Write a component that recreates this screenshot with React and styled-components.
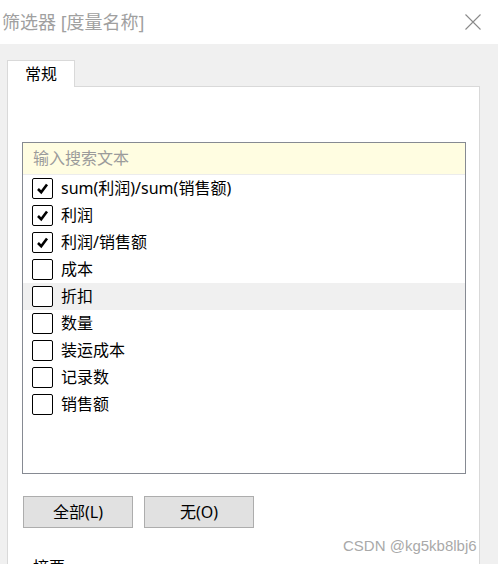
import React from 'react';
import styled, { createGlobalStyle } from 'styled-components';

const GlobalStyle = createGlobalStyle`
  html, body {
    margin: 0;
    padding: 0;
    background: #f0f0f0;
  }
  * { box-sizing: border-box; }
`;

const FONT = `"Noto Sans", "Noto Sans CJK SC", "Liberation Sans", sans-serif`;

const Dialog = styled.div`
  position: relative;
  width: 498px;
  height: 564px;
  overflow: hidden;
  background: #f0f0f0;
  font-family: ${FONT};
`;

const TitleBar = styled.div`
  height: 44px;
  background: #ffffff;
  display: flex;
  align-items: center;
  justify-content: space-between;
  padding: 0 17px 0 2px;
`;

const Title = styled.div`
  font-size: 18px;
  line-height: 20px;
  color: #a0a0a0;
  margin-top: -1px;
`;

const CloseButton = styled.div`
  width: 16px;
  height: 16px;
  display: flex;
  cursor: pointer;
  margin-top: -1px;
`;

const Body = styled.div`
  padding: 16px 0 0 7px;
`;

const TabStrip = styled.div`
  display: flex;
`;

const Tab = styled.div`
  position: relative;
  z-index: 1;
  width: 68px;
  height: 27px;
  margin-bottom: -1px;
  background: #ffffff;
  border: 1px solid #d9d9d9;
  border-bottom: none;
  font-size: 16px;
  line-height: 26px;
  color: #000;
  text-align: center;
`;

const Panel = styled.div`
  width: 473px;
  height: 500px;
  background: #ffffff;
  border: 1px solid #d9d9d9;
  padding: 55px 0 0 14px;
`;

const ListBox = styled.div`
  width: 444px;
  height: 332px;
  border: 1px solid #868a92;
  background: #ffffff;
`;

const SearchRow = styled.div`
  height: 32px;
  background: #fffde1;
  border-bottom: 1px solid #ececec;
  padding-left: 10px;
  font-size: 16px;
  line-height: 31px;
  color: #9b9b9b;
`;

const Row = styled.div`
  height: 27px;
  display: flex;
  align-items: center;
  gap: 8px;
  padding-left: 9px;
  background: ${(p) => (p.$hover ? '#f0f0f0' : 'transparent')};
  font-size: 16px;
  color: #000;
`;

const Box = styled.div`
  width: 21px;
  height: 21px;
  border: 1.5px solid #000;
  border-radius: 2px;
  background: #fff;
  display: flex;
  align-items: center;
  justify-content: center;
  flex-shrink: 0;
`;

const Label = styled.span`
  line-height: 20px;
  margin-top: -1px;
`;

const ButtonRow = styled.div`
  display: flex;
  gap: 11px;
  margin: 22px 0 0 1px;
`;

const Button = styled.button`
  width: 110px;
  height: 32px;
  background: #e1e1e1;
  border: 1px solid #adadad;
  font-family: ${FONT};
  font-size: 16px;
  line-height: 20px;
  color: #000;
  padding: 0;
  cursor: pointer;
`;

const SectionLabel = styled.div`
  margin: 29px 0 0 11px;
  font-size: 16px;
  line-height: 20px;
  color: #000;
`;

const Watermark = styled.div`
  position: absolute;
  left: 343px;
  top: 537px;
  font-family: "Liberation Sans", Arial, sans-serif;
  font-size: 15px;
  line-height: 17px;
  color: #a9a9a9;
`;

const items = [
  { name: 'sum(利润)/sum(销售额)', checked: true },
  { name: '利润', checked: true },
  { name: '利润/销售额', checked: true },
  { name: '成本', checked: false },
  { name: '折扣', checked: false, hover: true },
  { name: '数量', checked: false },
  { name: '装运成本', checked: false },
  { name: '记录数', checked: false },
  { name: '销售额', checked: false },
];

function Check() {
  return (
    <svg width="15" height="15" viewBox="0 0 15 15">
      <path d="M3 8 L6.2 11.2 L12 3.5" fill="none" stroke="#000" strokeWidth="2.6" strokeLinecap="butt" strokeLinejoin="miter" />
    </svg>
  );
}

export default function App() {
  return (
    <>
      <GlobalStyle />
      <Dialog>
        <TitleBar>
          <Title>筛选器 [度量名称]</Title>
          <CloseButton>
            <svg width="16" height="16" viewBox="0 0 16 16">
              <path d="M0.5 0.5 L15.5 15.5 M15.5 0.5 L0.5 15.5" stroke="#8a8a8a" strokeWidth="1.1" fill="none" />
            </svg>
          </CloseButton>
        </TitleBar>
        <Body>
          <TabStrip>
            <Tab>常规</Tab>
          </TabStrip>
          <Panel>
            <ListBox>
              <SearchRow>输入搜索文本</SearchRow>
              {items.map((it) => (
                <Row key={it.name} $hover={it.hover}>
                  <Box>{it.checked && <Check />}</Box>
                  <Label>{it.name}</Label>
                </Row>
              ))}
            </ListBox>
            <ButtonRow>
              <Button>全部(L)</Button>
              <Button>无(O)</Button>
            </ButtonRow>
            <SectionLabel>摘要</SectionLabel>
          </Panel>
        </Body>
        <Watermark>CSDN @kg5kb8lbj6</Watermark>
      </Dialog>
    </>
  );
}
